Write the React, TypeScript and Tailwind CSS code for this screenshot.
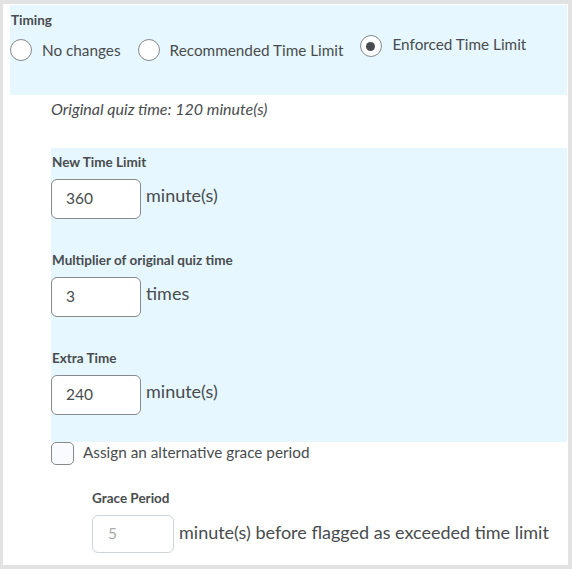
import React from 'react';

const font = { fontFamily: 'Lato, "Noto Sans", sans-serif' };

const Radio: React.FC<{ checked?: boolean }> = ({ checked }) => (
  <span className="flex h-[22px] w-[22px] shrink-0 items-center justify-center rounded-full border border-[#868a8d] bg-white">
    {checked && <span className="h-[9px] w-[9px] rounded-full bg-[#494c4e]" />}
  </span>
);

const NumberField: React.FC<{ label: string; value: string; unit: string }> = ({ label, value, unit }) => (
  <div className="flex flex-col">
    <div className="ml-[1px] text-[13.5px] font-bold leading-[16px] text-[#494c4e]">{label}</div>
    <div className="mt-[9px] flex items-start">
      <div className="flex h-[40px] w-[90px] items-center rounded-[6px] border border-[#868a8d] bg-white pl-[14px] text-[15.5px] text-[#494c4e]">
        {value}
      </div>
      <span className="ml-[5px] mt-[5px] text-[18px] leading-[22px] text-[#494c4e]">{unit}</span>
    </div>
  </div>
);

export default function App() {
  return (
    <div className="h-[569px] w-[572px] bg-[#e2e2e2] pl-[3px] pt-[4px]" style={font}>
      <div className="h-[561px] w-[565px] bg-white pt-[1px]">
        {/* Timing */}
        <div className="ml-[7px] h-[90px] w-[557px] bg-[#e6f7ff] pt-[7px]">
          <div className="ml-[1px] text-[13.5px] font-bold leading-[16px] text-[#494c4e]">Timing</div>
          <div className="mt-[5px] flex items-start text-[15.3px] text-[#494c4e]">
            <div className="mt-[6px] flex items-center">
              <Radio />
              <span className="ml-[10px] leading-[20px]">No changes</span>
            </div>
            <div className="ml-[17px] mt-[6px] flex items-center">
              <Radio />
              <span className="ml-[10px] leading-[20px]">Recommended Time Limit</span>
            </div>
            <div className="ml-[16px] mt-[2px] flex items-center">
              <Radio checked />
              <span className="ml-[11px] -mt-[4px] leading-[20px]">Enforced Time Limit</span>
            </div>
          </div>
        </div>

        <div className="ml-[48px] mt-[4px] text-[16px] italic leading-[20px] text-[#494c4e]">
          Original quiz time: 120 minute(s)
        </div>

        {/* Time fields */}
        <div className="ml-[48px] mt-[29px] flex h-[294px] w-[516px] flex-col gap-[33px] bg-[#e6f7ff] pt-[6px]">
          <NumberField label="New Time Limit" value="360" unit="minute(s)" />
          <NumberField label="Multiplier of original quiz time" value="3" unit="times" />
          <NumberField label="Extra Time" value="240" unit="minute(s)" />
        </div>

        <div className="ml-[48px] flex items-start">
          <span className="h-[23px] w-[23px] rounded-[5px] border border-[#868a8d] bg-[#f9fbff]" />
          <span className="ml-[9px] text-[15.3px] leading-[20px] text-[#494c4e]">Assign an alternative grace period</span>
        </div>

        <div className="ml-[89px] mt-[25px] flex flex-col">
          <div className="text-[13.5px] font-bold leading-[16px] text-[#494c4e]">Grace Period</div>
          <div className="mt-[9px] flex items-start">
            <div className="flex h-[38px] w-[82px] items-center rounded-[6px] border border-[#cdd5dc] bg-white pl-[15px] text-[15.5px] text-[#a8abad]">
              5
            </div>
            <span className="ml-[5px] mt-[6px] text-[18px] leading-[22px] text-[#494c4e]">
              minute(s) before flagged as exceeded time limit
            </span>
          </div>
        </div>
      </div>
    </div>
  );
}
